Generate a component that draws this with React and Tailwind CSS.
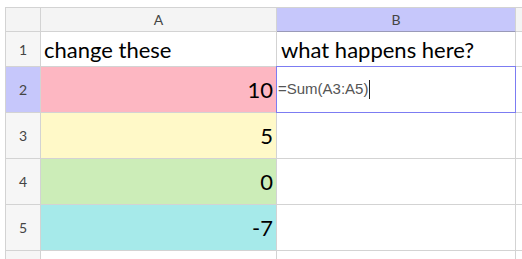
import React from 'react';

const rows = [
  { n: 1, a: 'change these', b: 'what happens here?', bg: 'bg-white', text: true },
  { n: 2, a: '10', bg: 'bg-[#fdb7c2]', active: true },
  { n: 3, a: '5', bg: 'bg-[#fff9c8]' },
  { n: 4, a: '0', bg: 'bg-[#ccedb8]' },
  { n: 5, a: '-7', bg: 'bg-[#a6eaea]' },
  { n: '', a: '', bg: 'bg-white' },
];

const cell = 'border-r border-b border-[#d3d3d3]';
const gill = { fontFamily: 'Lato, "Open Sans", sans-serif' };

const App = () => {
  return (
    <div className="w-[522px] h-[259px] overflow-hidden bg-white pt-[7px] pl-[5px]">
      <div
        className="grid grid-cols-[35px_236px_239px_60px] grid-rows-[24px_35px_46px_46px_46px_46px_46px] border-t border-l border-[#d3d3d3]"
        style={gill}
      >
        {/* column headers */}
        <div className={`${cell} bg-[#f4f4f4]`} />
        <div className={`${cell} bg-[#f4f4f4] flex items-center justify-center text-[14px] text-[#444]`}>A</div>
        <div className="border-r border-b border-r-[#d3d3d3] border-b-[#9a9ab8] bg-[#c6c7fb] flex items-center justify-center text-[14px] text-[#444]">B</div>
        <div className={`${cell} bg-[#f4f4f4]`} />

        {rows.map((r, i) => (
          <React.Fragment key={i}>
            <div
              className={`${cell} flex items-center justify-center text-[14px] text-[#444] ${
                r.active ? 'bg-[#c6c7fb]' : 'bg-[#f6f6f6]'
              }`}
            >
              {r.n}
            </div>
            <div
              className={`${cell} ${r.bg} flex items-center text-black text-[22px] ${
                r.text ? 'justify-start pl-[3px]' : 'justify-end pr-[3px]'
              }`}
            >
              {r.a}
            </div>
            <div className={`${cell} relative bg-white flex items-center pl-[4px] text-[22px] text-black`}>
              {r.b}
              {r.active && (
                <div className="absolute -left-px -top-px right-[-1px] bottom-[-1px] border border-[#7c7cf2] flex items-center pl-[1px]">
                  <span
                    className="text-[15px] text-[#555]"
                    style={{ fontFamily: '"Liberation Sans", Arial, sans-serif' }}
                  >
                    =Sum(A3:A5)
                  </span>
                  <span className="ml-[1px] w-px h-[19px] bg-[#222]" />
                </div>
              )}
            </div>
            <div className={`${cell} bg-white`} />
          </React.Fragment>
        ))}
      </div>
    </div>
  );
};

export default App;
